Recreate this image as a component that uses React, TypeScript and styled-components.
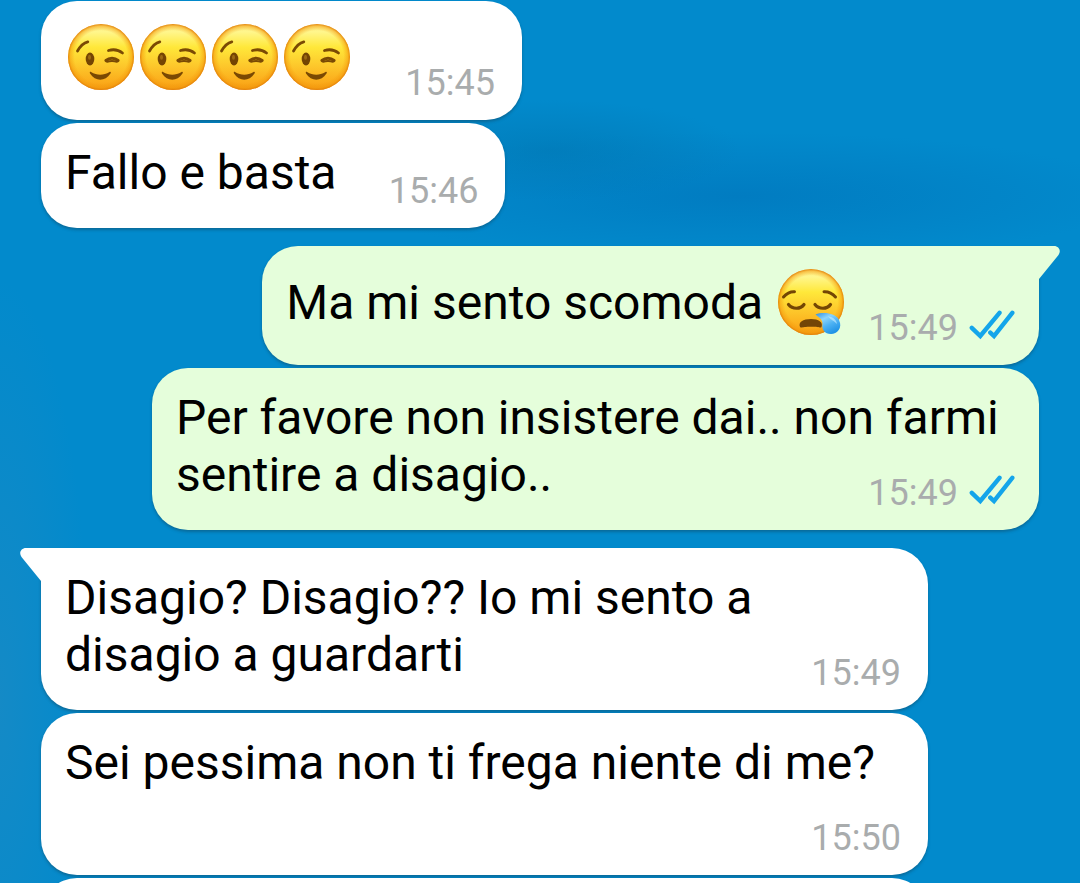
import React, { useId } from "react";
import styled, { createGlobalStyle, css } from "styled-components";

type Side = "in" | "out";

const GlobalStyle = createGlobalStyle`
  * { box-sizing: border-box; }
  body {
    margin: 0;
    background: #028acc;
    font-family: Roboto, "Liberation Sans", sans-serif;
  }
`;

const Chat = styled.main`
  height: 100vh;
  overflow: hidden;
  display: flex;
  flex-direction: column;
  gap: 18px;
  padding: 1px 41px 0;
  background:
    radial-gradient(ellipse 190px 50px at 550px 150px, rgba(0, 112, 170, 0.45), transparent),
    radial-gradient(ellipse 400px 64px at 740px 196px, rgba(0, 110, 182, 0.5), transparent),
    radial-gradient(ellipse 90px 420px at 0 700px, rgba(28, 138, 196, 0.7), transparent),
    #028acc;
`;

const Group = styled.section<{ $side: Side }>`
  flex: none;
  display: flex;
  flex-direction: column;
  align-items: ${(p) => (p.$side === "out" ? "flex-end" : "flex-start")};
  gap: 3px;
`;

const Bubble = styled.article<{ $side: Side; $tail?: boolean }>`
  position: relative;
  display: grid;
  max-width: min(887px, 94%);
  padding: 21px 24px 16px;
  border-radius: 36px;
  background: ${(p) => (p.$side === "out" ? "#e5fedb" : "#ffffff")};
  box-shadow: 0 2px 3px rgba(20, 60, 80, 0.4);
  ${(p) =>
    p.$tail &&
    (p.$side === "out"
      ? css`border-top-right-radius: 0;`
      : css`border-top-left-radius: 0;`)}
`;

const NextBubble = styled(Bubble)`
  width: 100%;
  min-height: 105px;
`;

const Text = styled.p`
  grid-area: 1 / 1;
  margin: 0;
  padding-bottom: 11px;
  font-size: 48px;
  line-height: 57px;
  color: #000000;
`;

/* Keeps room for the time at the end of the last line. */
const TimeRoom = styled.span<{ $side: Side }>`
  display: inline-block;
  width: ${(p) => (p.$side === "out" ? 168 : 145)}px;
  height: 1px;
`;

const Meta = styled.div`
  grid-area: 1 / 1;
  place-self: end;
  display: flex;
  align-items: baseline;
  gap: 11px;
  font-size: 36px;
  line-height: 42px;
  color: #a9acad;
`;

const Stamp = styled.time<{ $side: Side }>`
  margin-right: ${(p) => (p.$side === "in" ? 3 : 0)}px;
`;

const TailShape = styled.svg<{ $side: Side }>`
  position: absolute;
  top: 0;
  ${(p) => (p.$side === "out" ? "right: -21px;" : "left: -21px; transform: scaleX(-1);")}
`;

const EmojiSvg = styled.svg`
  width: 72px;
  height: 71px;
  vertical-align: -19px;
`;

function Tail({ side }: { side: Side }) {
  return (
    <TailShape $side={side} width="22" height="34" viewBox="0 0 22 34" aria-hidden="true">
      <path
        d="M0 0H16C21 0 23.500 5 20.500 9L1 33V34H0Z"
        fill={side === "out" ? "#e5fedb" : "#ffffff"}
      />
    </TailShape>
  );
}

function Ticks() {
  return (
    <svg width="46" height="30" viewBox="0 0 46 30" role="img" aria-label="Letto">
      <g fill="none" stroke="#14a5ea" strokeWidth="4.400" strokeLinecap="round" strokeLinejoin="miter">
        <path d="M2.800 17.800L11.300 26L30.500 2.800" />
        <path d="M21.300 22.600L25 26L43.300 2.800" />
      </g>
    </svg>
  );
}

function Face({ label, children }: { label: string; children: React.ReactNode }) {
  const id = useId();
  const base = `${id}-base`;
  const rim = `${id}-rim`;
  return (
    <EmojiSvg viewBox="0 -1 72 71" role="img" aria-label={label}>
      <defs>
        <linearGradient id={base} x1="0" y1="0" x2="0" y2="1">
          <stop offset="0" stopColor="#fdf08a" />
          <stop offset="0.12" stopColor="#fff68c" />
          <stop offset="0.35" stopColor="#ffe83a" />
          <stop offset="0.62" stopColor="#fdc92c" />
          <stop offset="0.88" stopColor="#fbab1b" />
          <stop offset="1" stopColor="#f39a10" />
        </linearGradient>
        <radialGradient id={rim} cx="0.5" cy="0.5" r="0.5">
          <stop offset="0.8" stopColor="#f59a0c" stopOpacity="0" />
          <stop offset="0.93" stopColor="#f3980c" stopOpacity="0.5" />
          <stop offset="1" stopColor="#e07c0a" stopOpacity="0.95" />
        </radialGradient>
      </defs>
      <circle cx="36" cy="34" r="33" fill={`url(#${base})`} />
      <circle cx="36" cy="34" r="33" fill={`url(#${rim})`} />
      {children}
    </EmojiSvg>
  );
}

function Wink() {
  return (
    <Face label="😉">
      <g fill="none" stroke="#7a4a04" strokeLinecap="round">
        <path d="M12.500 28C15 23.500 18.500 19.800 22.800 18.800" strokeWidth="2.800" />
        <path d="M43.500 27.500C48.500 26 53.500 26.800 57.500 30" strokeWidth="2.800" />
        <path d="M41 37.500C44.500 34.500 49.500 34.500 53 37.500" strokeWidth="3.200" />
        <path d="M42 38.800C45.500 37.800 48.500 37.800 52 38.800" strokeWidth="2" />
      </g>
      <ellipse cx="25" cy="36" rx="4.300" ry="6.400" fill="#744403" />
      <ellipse cx="24.500" cy="34.300" rx="1.500" ry="2.500" fill="#9c6912" />
      <path
        d="M26 49C32 52.500 38.500 52.500 44.500 49C45.800 48.500 46.300 49.500 45.500 50.500C40 58.800 30.500 58.800 25 50.500C24.400 49.300 25 48.500 26 49Z"
        fill="#7a4903"
      />
    </Face>
  );
}

function Sleepy() {
  const drop = useId();
  return (
    <Face label="😪">
      <defs>
        <linearGradient id={drop} x1="0" y1="0" x2="0.6" y2="1">
          <stop offset="0" stopColor="#2f8fe0" />
          <stop offset="0.35" stopColor="#8bd4fb" />
          <stop offset="0.65" stopColor="#4db2f3" />
          <stop offset="1" stopColor="#2193e6" />
        </linearGradient>
      </defs>
      <g fill="none" stroke="#734604" strokeLinecap="round">
        <path d="M8.500 29C11.500 25.500 15.500 23.500 19.500 23.700" strokeWidth="3" />
        <path d="M49 23.700C53.500 23.500 57.500 25.500 60.500 29" strokeWidth="3" />
        <path d="M13.500 36.500C17.500 41.500 25.500 41.500 29 36.500" strokeWidth="3.200" />
        <path d="M40 36.500C44 41.500 52 41.500 55.500 36.500" strokeWidth="3.200" />
      </g>
      <path
        d="M25 59C23 54 28 51 36 51C43.500 51 48.500 54 46.500 59C45.500 60.200 44 58.800 36 58.800C28 58.800 26.500 60.200 25 59Z"
        fill="#734507"
      />
      <path
        d="M40.500 46.500C48 43.500 61 45 64 52C68 60 62 66 56 66C49.500 66 46.500 61 47.500 56C48 51.500 43.500 49 40.500 46.500Z"
        fill={`url(#${drop})`}
      />
      <path d="M53 48.500C58.500 49 61.500 52 62 56C59.500 53 56.500 52.500 53 48.500Z" fill="#bce7fd" opacity="0.7" />
    </Face>
  );
}

interface MessageProps {
  side: Side;
  time: string;
  tail?: boolean;
  children: React.ReactNode;
}

function Message({ side, time, tail, children }: MessageProps) {
  return (
    <Bubble $side={side} $tail={tail}>
      {tail && <Tail side={side} />}
      <Text>
        {children}
        <TimeRoom $side={side} />
      </Text>
      <Meta>
        <Stamp $side={side}>{time}</Stamp>
        {side === "out" && <Ticks />}
      </Meta>
    </Bubble>
  );
}

export default function App() {
  return (
    <>
      <GlobalStyle />
      <Chat>
        <Group $side="in">
          <Message side="in" time="15:45">
            <Wink />
            <Wink />
            <Wink />
            <Wink />
          </Message>
          <Message side="in" time="15:46">Fallo e basta</Message>
        </Group>
        <Group $side="out">
          <Message side="out" time="15:49" tail>
            Ma mi sento scomoda <Sleepy />
          </Message>
          <Message side="out" time="15:49">
            Per favore non insistere dai.. non farmi sentire a disagio..
          </Message>
        </Group>
        <Group $side="in">
          <Message side="in" time="15:49" tail>
            Disagio? Disagio?? Io mi sento a disagio a guardarti
          </Message>
          <Message side="in" time="15:50">Sei pessima non ti frega niente di me?</Message>
          <NextBubble $side="in" aria-hidden="true" />
        </Group>
      </Chat>
    </>
  );
}
